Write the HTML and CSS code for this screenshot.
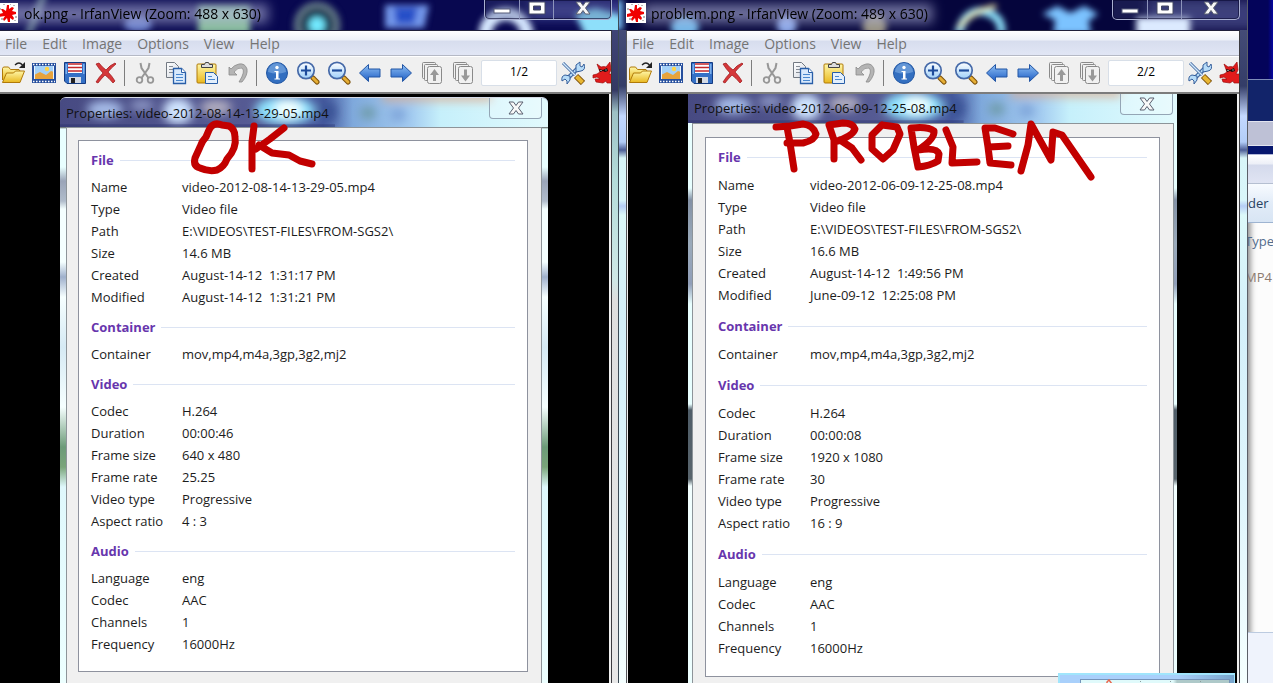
FILE: index.html
```html
<!DOCTYPE html>
<html lang="en">
<head>
<meta charset="utf-8">
<title>IrfanView</title>
<link rel="stylesheet" href="styles.css">
</head>
<body>
<svg class="defs" width="0" height="0" aria-hidden="true">
  <defs>
    <linearGradient id="gold" x1="0" y1="0" x2="0" y2="1"><stop offset="0" stop-color="#fff7a8"/><stop offset="1" stop-color="#e9b81f"/></linearGradient>
    <linearGradient id="blue" x1="0" y1="0" x2="0" y2="1"><stop offset="0" stop-color="#8fc0f4"/><stop offset="1" stop-color="#1c5cc4"/></linearGradient>
    <linearGradient id="paper" x1="0" y1="0" x2="1" y2="1"><stop offset="0" stop-color="#fff"/><stop offset="1" stop-color="#d5dae2"/></linearGradient>
    <linearGradient id="sky" x1="0" y1="0" x2="0" y2="1"><stop offset="0" stop-color="#fff"/><stop offset="1" stop-color="#9fd0fa"/></linearGradient>
    <linearGradient id="aero" x1="0" y1="0" x2="1" y2="0"><stop offset="0" stop-color="#474a82"/><stop offset=".4" stop-color="#565b94"/><stop offset=".54" stop-color="#46599e"/><stop offset=".6" stop-color="#7fa9dc"/><stop offset=".72" stop-color="#a3cbf0"/><stop offset=".78" stop-color="#c6f0fb"/><stop offset="1" stop-color="#e2fafd"/></linearGradient>
    <filter id="soft" x="-50%" y="-50%" width="200%" height="200%"><feGaussianBlur stdDeviation="3"/></filter>
    <filter id="cloud" x="-50%" y="-50%" width="200%" height="200%"><feGaussianBlur stdDeviation="5"/></filter>
    <filter id="haze" x="-50%" y="-80%" width="200%" height="260%"><feGaussianBlur stdDeviation="6"/></filter>
  </defs>
  <symbol id="dialog-glass" viewBox="0 0 488 31" preserveAspectRatio="none">
    <path fill="url(#aero)" d="M0 0h488v31H0z"/>
    <g filter="url(#cloud)"><ellipse cx="45" cy="12" rx="18" ry="9" fill="#a6bce8"/><ellipse cx="82" cy="8" rx="12" ry="6" fill="#8c96c4"/><ellipse cx="118" cy="14" rx="15" ry="14" fill="#cfe4ff"/><ellipse cx="156" cy="10" rx="16" ry="8" fill="#b1adc0"/><ellipse cx="225" cy="13" rx="30" ry="15" fill="#8fe4ff"/><ellipse cx="228" cy="12" rx="14" ry="10" fill="#f0ffff"/><ellipse cx="268" cy="15" rx="9" ry="12" fill="#3b5296"/><ellipse cx="308" cy="16" rx="8" ry="7" fill="#6f9cab"/><ellipse cx="338" cy="18" rx="8" ry="7" fill="#7fa5da"/><path fill="#dba98e" d="M322-8h110V4H322z" opacity=".7"/></g>
    <path fill="#232a66" d="M0 28h275v3H0z" opacity=".35"/>
  </symbol>
  <symbol id="i-logo" viewBox="0 0 20 20"><path fill="#fff" d="M0 0h20v20H0z"/><path fill="#b9b9b9" d="M1 5h2v2H1zM15 2h2v1h-2zM17 13h2v2h-2zM3 15h2v2H3zM5 1h2v1H5zM16 17h2v1h-2zM12 1h1v1h-1z"/><path fill="#f00000" d="M9 2h2v4l3-2 2 1-2 3 4 1v2l-4 1 2 3-1 2-3-2v4h-2l-1-4-3 3-1-2 2-3-6 1V11l4-1-2-4 2 0 3 2z"/></symbol>
  <symbol id="i-open" viewBox="0 0 24 24"><path fill="url(#gold)" stroke="#b07a08" d="M1.500 19V7.500l1-1.500h5l2 2.500h8.500l1 1.500v2"/><path fill="url(#gold)" stroke="#b07a08" stroke-linejoin="round" d="M1.500 21.500L5.500 12h7l2-2h9L19 21.500z"/><path fill="none" stroke="#222" stroke-width="1.300" d="M14 4q4-4 7.500 0"/><path d="M24 1v6h-6z" fill="#222"/></symbol>
  <symbol id="i-thumb" viewBox="0 0 24 24"><path fill="#264f9d" d="M0 2h24v20H0z"/><path fill="#a4d1f8" d="M2 5h20v13H2z"/><path fill="#e7a33c" d="M2 14l6-3 6 3 5-4 3 1v7H2z"/><circle cx="15" cy="8" r="2.200" fill="#ffd447"/><path stroke="#fff" stroke-width="1.300" stroke-dasharray="1.500 1.500" d="M1 3.500h22M1 20.500h22"/><path stroke="#e9f4ff" d="M2.500 5v13M21.500 5v13"/></symbol>
  <symbol id="i-save" viewBox="0 0 24 24"><path fill="#3470c6" stroke="#143b82" d="M1.500 1.500h21v21H4l-2.500-2.500z"/><path fill="#fff" d="M5 2h14v10H5z"/><path stroke="#c3272b" stroke-width="1.400" d="M5 3h14M5 6.500h14M5 10h14"/><path fill="#d4dbe6" d="M6 16h12v6H6z"/><path fill="#222" d="M8 17h4v5H8z"/><path fill="#7db0ec" d="M2.500 3H4v10H2.500zM20 3h1.500v10H20z"/></symbol>
  <symbol id="i-delete" viewBox="0 0 24 24"><path fill="#d5383a" stroke="#9c1013" stroke-width=".7" d="M2 3l3-1q3 4 7 7 4-5 9-7l1 1q-5 4-8 8 4 4 7 9l-2 2q-4-5-8-8-4 4-7 8l-2-1q3-5 7-9Q5 8 2 3z"/></symbol>
  <symbol id="i-cut" viewBox="0 0 24 24"><path fill="none" stroke="#979797" stroke-width="2" d="M7.500 2l1 5 7 10M16.500 2l-1 5-7 10"/><circle cx="6.500" cy="19" r="2.800" fill="none" stroke="#979797" stroke-width="1.800"/><circle cx="17.500" cy="19" r="2.800" fill="none" stroke="#979797" stroke-width="1.800"/></symbol>
  <symbol id="i-copy" viewBox="0 0 24 24"><path fill="url(#paper)" stroke="#727982" d="M2.500 1.500h8l4 4v11h-12z"/><path stroke="#858b94" d="M5 5.500h4M5 8.500h7M5 11.500h4"/><path fill="#d8e9fc" stroke="#285ea8" stroke-width="1.300" d="M9.500 7.500h8l4 4v11h-12z"/><path fill="#fff" stroke="#285ea8" d="M17.500 7.500v4h4"/><path stroke="#4a88cf" d="M12 13.500h7M12 16.500h7M12 19.500h7"/></symbol>
  <symbol id="i-paste" viewBox="0 0 24 24"><rect x="2" y="3" width="19" height="19" rx="1" fill="url(#gold)" stroke="#b07a08"/><path fill="#ddd" stroke="#444" d="M6.500 6.500v-3h3l1-2h3l1 2h3v3z"/><path fill="#e3effc" stroke="#285ea8" d="M10.500 11.500h8l4 4v7h-12z"/><path stroke="#4a88cf" d="M13 15.500h4M13 18.500h7"/></symbol>
  <symbol id="i-undo" viewBox="0 0 24 24"><path fill="#b4b4b4" stroke="#8b8b8b" stroke-width=".8" stroke-linejoin="round" d="M3 6v8h8l-3-3q4-5 8-4 4 3-3 14h3q6-7 5-13-2-6-8-5-5 1-8 5z"/></symbol>
  <symbol id="i-info" viewBox="0 0 24 24"><circle cx="12" cy="12" r="10.500" fill="#336fc0" stroke="#2257a4"/><path fill="#78a7df" opacity=".7" d="M3 11a9 9 0 0 1 18 0q-9 3-18 0z"/><circle cx="12" cy="6.500" r="1.700" fill="#fff"/><path fill="#fff" d="M9.500 10h4v7.500H15v1H9.500v-1H11V11H9.500z"/></symbol>
  <symbol id="i-zoomin" viewBox="0 0 24 24"><path stroke="#7b4f08" stroke-width="5" stroke-linecap="round" d="M17 17l4 4"/><path stroke="#e5ae35" stroke-width="3" stroke-linecap="round" d="M17 17l4 4"/><circle cx="10" cy="9.500" r="8.200" fill="url(#sky)" stroke="#4569a8" stroke-width="1.700"/><path stroke="#1d4b9b" stroke-width="2.200" d="M5 9.500h10M10 4.500v10"/></symbol>
  <symbol id="i-zoomout" viewBox="0 0 24 24"><path stroke="#7b4f08" stroke-width="5" stroke-linecap="round" d="M17 17l4 4"/><path stroke="#e5ae35" stroke-width="3" stroke-linecap="round" d="M17 17l4 4"/><circle cx="10" cy="9.500" r="8.200" fill="url(#sky)" stroke="#4569a8" stroke-width="1.700"/><path stroke="#1d4b9b" stroke-width="2.200" d="M5 9.500h10"/></symbol>
  <symbol id="i-prev" viewBox="0 0 24 24"><path fill="url(#blue)" stroke="#2356a5" stroke-linejoin="round" d="M1.500 12L10.500 3.500V8H22v8H10.500v4.500z"/></symbol>
  <symbol id="i-next" viewBox="0 0 24 24"><path fill="url(#blue)" stroke="#2356a5" stroke-linejoin="round" d="M22.500 12L13.500 3.500V8H2v8h11.500v4.500z"/></symbol>
  <symbol id="i-first" viewBox="0 0 24 24"><g fill="#f1f1f1" stroke="#8a8a8a"><rect x="2.500" y="1.500" width="13" height="16" rx="1"/><rect x="4.500" y="3.500" width="13" height="16" rx="1"/><rect x="7.500" y="5.500" width="14" height="17" rx="2"/></g><path fill="#999" d="M14.500 8l4.500 6h-3v6h-3v-6h-3z"/></symbol>
  <symbol id="i-last" viewBox="0 0 24 24"><g fill="#f1f1f1" stroke="#8a8a8a"><rect x="2.500" y="1.500" width="13" height="16" rx="1"/><rect x="4.500" y="3.500" width="13" height="16" rx="1"/><rect x="7.500" y="5.500" width="14" height="17" rx="2"/></g><path fill="#999" d="M14.500 20.500l4.500-6h-3v-6h-3v6h-3z"/></symbol>
  <symbol id="i-tools" viewBox="0 0 24 24"><path stroke="#365f9b" stroke-width="4" d="M6 18L17 7"/><path stroke="#b7dcf8" stroke-width="2.200" d="M6 18L17 7"/><path fill="#b7dcf8" stroke="#365f9b" d="M15 9V4l4-3v4l2 1 2-3q2 6-3 7l-5 1zM9 15v4l-3 4v-3l-2-2-3 2q-1-5 3-6z"/><path stroke="#365f9b" stroke-width="3" d="M2 2l12 12"/><path stroke="#d0e8fb" stroke-width="1.500" d="M2 2l12 12"/><path stroke="#7b4f08" stroke-width="6" d="M15 15l7 7"/><path stroke="#e8b632" stroke-width="4" d="M15.500 15.500l6 6"/></symbol>
  <symbol id="i-cat" viewBox="0 0 24 24"><path fill="#e01b1b" stroke="#9d0b0b" stroke-width=".7" d="M5 3l4 3q3-1 5 0l4-5 1 8-2 4 3 0 3-3 1 3-3 5v4h-6l-1-2-3 2-7-1-1-3 5 0-3-2-4 1 0-3 4-1 3-2z"/><path fill="#111" d="M7 8l4 1 4-2 1 3-3 1-2-1-3 1z"/><path stroke="#fff" d="M8.500 9.500h1M13.500 9h1"/></symbol>
  <symbol id="i-min" viewBox="0 0 18 16"><rect x="1" y="9" width="16" height="4" fill="#fff" stroke="#555b78"/></symbol>
  <symbol id="i-max" viewBox="0 0 18 16"><path fill="#fff" fill-rule="evenodd" stroke="#444963" d="M1 2h16v12H1zM5.500 6v4h7V6z"/></symbol>
  <symbol id="i-close" viewBox="0 0 18 16"><path fill="#f8f8f8" stroke="#5b6070" d="M2 2h4.500L9 5.500 11.500 2H16l-4.500 6L16 14h-4.500L9 10.500 6.500 14H2l4.500-6z"/></symbol>
</svg>

<main class="desktop">
  <section class="window window-left" aria-label="ok.png">
    <header class="titlebar">
      <svg class="glass" viewBox="0 0 618 30" preserveAspectRatio="none" aria-hidden="true">
        <g filter="url(#soft)"><path fill="#86bd9a" d="M198 6h52v28h-52z"/><ellipse cx="138" cy="24" rx="14" ry="8" fill="#7e9ae8" opacity=".8"/><path stroke="#a2c7bf" stroke-width="7" d="M44-5L28 35" opacity=".6"/><circle cx="317" cy="25" r="20" fill="#1b3d55" stroke="#5d7282" stroke-width="7"/><circle cx="317" cy="25" r="8" fill="#72e9ff"/><path fill="#7499ec" d="M385 5h44l-5 23h-39z"/><path fill="#2550c8" d="M394 7h24l-4 17h-18z"/><circle cx="506" cy="35" r="21" fill="none" stroke="#d7e8ff" stroke-width="13"/></g>
        <g filter="url(#haze)"><path fill="#b4b7dc" d="M-20 4h288v19H-20z" opacity=".6"/><path fill="#474b9a" d="M530 0h100v20H530z" opacity=".8"/></g>
        <g filter="url(#soft)"><path fill="#8edffa" d="M575 14l20-6 30 8v24h-38z"/></g>
      </svg>
      <svg class="logo"><use href="#i-logo"/></svg>
      <h1>ok.png - IrfanView (Zoom: 488 x 630)</h1>
      <div class="caption"><button aria-label="Minimize"><svg><use href="#i-min"/></svg></button><button aria-label="Maximize"><svg><use href="#i-max"/></svg></button><button aria-label="Close"><svg><use href="#i-close"/></svg></button></div>
    </header>
    <div class="client">
      <nav class="menu"><button>File</button><button>Edit</button><button>Image</button><button>Options</button><button>View</button><button>Help</button></nav>
      <div class="toolbar">
        <button aria-label="Open"><svg><use href="#i-open"/></svg></button><button aria-label="Thumbnails"><svg><use href="#i-thumb"/></svg></button><button aria-label="Save"><svg><use href="#i-save"/></svg></button><button aria-label="Delete"><svg><use href="#i-delete"/></svg></button><i class="sep"></i><button aria-label="Cut"><svg><use href="#i-cut"/></svg></button><button aria-label="Copy"><svg><use href="#i-copy"/></svg></button><button aria-label="Paste"><svg><use href="#i-paste"/></svg></button><button aria-label="Undo"><svg><use href="#i-undo"/></svg></button><i class="sep"></i><button aria-label="Information"><svg><use href="#i-info"/></svg></button><button aria-label="Zoom in"><svg><use href="#i-zoomin"/></svg></button><button aria-label="Zoom out"><svg><use href="#i-zoomout"/></svg></button><button aria-label="Previous"><svg><use href="#i-prev"/></svg></button><button aria-label="Next"><svg><use href="#i-next"/></svg></button><button aria-label="Previous page"><svg><use href="#i-first"/></svg></button><button aria-label="Next page"><svg><use href="#i-last"/></svg></button><input type="text" aria-label="File position" value="1/2"><button aria-label="Settings"><svg><use href="#i-tools"/></svg></button><button aria-label="About"><svg><use href="#i-cat"/></svg></button>
      </div>
      <div class="view">
        <article class="dialog">
          <header class="dialog-title"><svg class="glass" aria-hidden="true"><use href="#dialog-glass"/></svg><h2>Properties: video-2012-08-14-13-29-05.mp4</h2><button aria-label="Close properties"><svg><use href="#i-close"/></svg></button></header>
          <div class="dialog-body"><div class="page">
            <section class="group"><h3>File</h3><dl><dt>Name</dt><dd>video-2012-08-14-13-29-05.mp4</dd><dt>Type</dt><dd>Video file</dd><dt>Path</dt><dd>E:\VIDEOS\TEST-FILES\FROM-SGS2\</dd><dt>Size</dt><dd>14.6 MB</dd><dt>Created</dt><dd>August-14-12&nbsp; 1:31:17 PM</dd><dt>Modified</dt><dd>August-14-12&nbsp; 1:31:21 PM</dd></dl></section>
            <section class="group"><h3>Container</h3><dl><dt>Container</dt><dd>mov,mp4,m4a,3gp,3g2,mj2</dd></dl></section>
            <section class="group"><h3>Video</h3><dl><dt>Codec</dt><dd>H.264</dd><dt>Duration</dt><dd>00:00:46</dd><dt>Frame size</dt><dd>640 x 480</dd><dt>Frame rate</dt><dd>25.25</dd><dt>Video type</dt><dd>Progressive</dd><dt>Aspect ratio</dt><dd>4 : 3</dd></dl></section>
            <section class="group"><h3>Audio</h3><dl><dt>Language</dt><dd>eng</dd><dt>Codec</dt><dd>AAC</dd><dt>Channels</dt><dd>1</dd><dt>Frequency</dt><dd>16000Hz</dd></dl></section>
          </div></div>
          <svg class="scribble scribble-ok" viewBox="188 118 132 60" role="img" aria-label="OK">
            <path d="M222 125Q213 121 209 130L206 137Q202 141 200 147L195 158Q193 166 200 168Q209 172 217 170Q224 167 227 159Q237 148 235 137Q235 129 229 126L222 125"/><path d="M254 126L252 142V169"/><path d="M284 128L270 139L256 149"/><path d="M259 145L272 153L289 155L300 161L312 164"/>
          </svg>
        </article>
      </div>
    </div>
  </section>

  <section class="window window-right" aria-label="problem.png">
    <header class="titlebar">
      <svg class="glass" viewBox="0 0 629 30" preserveAspectRatio="none" aria-hidden="true">
        <g filter="url(#soft)"><path fill="#76baf0" d="M-8 0h12v30H-8z"/><ellipse cx="66" cy="27" rx="14" ry="11" fill="#71b5e7"/><ellipse cx="168" cy="25" rx="10" ry="10" fill="#8aa7e9"/><circle cx="256" cy="26" r="12" fill="#d4cc9d" opacity=".7"/><path fill="none" stroke="#8bdff8" stroke-width="8" d="M340 34q5-22 23-23 22 4 20 23"/><path fill="none" stroke="#f2e9a4" stroke-width="4" d="M340 28q14-18 38-22"/><path fill="#7bc3ff" d="M424 14l15-8 13 7 14-7 14 8-10 7 3 13h-38l2-14z"/></g>
        <g filter="url(#haze)"><path fill="#b4b7dc" d="M24 4h290v19H24z" opacity=".6"/><path fill="#474b8a" d="M530 0h110v30H530z" opacity=".8"/></g>
        <g filter="url(#soft)"><path fill="#dceaff" d="M518 17h54v20h-54z"/></g>
      </svg>
      <svg class="logo"><use href="#i-logo"/></svg>
      <h1>problem.png - IrfanView (Zoom: 489 x 630)</h1>
      <div class="caption"><button aria-label="Minimize"><svg><use href="#i-min"/></svg></button><button aria-label="Maximize"><svg><use href="#i-max"/></svg></button><button aria-label="Close"><svg><use href="#i-close"/></svg></button></div>
    </header>
    <div class="client">
      <nav class="menu"><button>File</button><button>Edit</button><button>Image</button><button>Options</button><button>View</button><button>Help</button></nav>
      <div class="toolbar">
        <button aria-label="Open"><svg><use href="#i-open"/></svg></button><button aria-label="Thumbnails"><svg><use href="#i-thumb"/></svg></button><button aria-label="Save"><svg><use href="#i-save"/></svg></button><button aria-label="Delete"><svg><use href="#i-delete"/></svg></button><i class="sep"></i><button aria-label="Cut"><svg><use href="#i-cut"/></svg></button><button aria-label="Copy"><svg><use href="#i-copy"/></svg></button><button aria-label="Paste"><svg><use href="#i-paste"/></svg></button><button aria-label="Undo"><svg><use href="#i-undo"/></svg></button><i class="sep"></i><button aria-label="Information"><svg><use href="#i-info"/></svg></button><button aria-label="Zoom in"><svg><use href="#i-zoomin"/></svg></button><button aria-label="Zoom out"><svg><use href="#i-zoomout"/></svg></button><button aria-label="Previous"><svg><use href="#i-prev"/></svg></button><button aria-label="Next"><svg><use href="#i-next"/></svg></button><button aria-label="Previous page"><svg><use href="#i-first"/></svg></button><button aria-label="Next page"><svg><use href="#i-last"/></svg></button><input type="text" aria-label="File position" value="2/2"><button aria-label="Settings"><svg><use href="#i-tools"/></svg></button><button aria-label="About"><svg><use href="#i-cat"/></svg></button>
      </div>
      <div class="view">
        <article class="dialog">
          <header class="dialog-title"><svg class="glass" aria-hidden="true"><use href="#dialog-glass"/></svg><h2>Properties: video-2012-06-09-12-25-08.mp4</h2><button aria-label="Close properties"><svg><use href="#i-close"/></svg></button></header>
          <div class="dialog-body"><div class="page">
            <section class="group"><h3>File</h3><dl><dt>Name</dt><dd>video-2012-06-09-12-25-08.mp4</dd><dt>Type</dt><dd>Video file</dd><dt>Path</dt><dd>E:\VIDEOS\TEST-FILES\FROM-SGS2\</dd><dt>Size</dt><dd>16.6 MB</dd><dt>Created</dt><dd>August-14-12&nbsp; 1:49:56 PM</dd><dt>Modified</dt><dd>June-09-12&nbsp; 12:25:08 PM</dd></dl></section>
            <section class="group"><h3>Container</h3><dl><dt>Container</dt><dd>mov,mp4,m4a,3gp,3g2,mj2</dd></dl></section>
            <section class="group"><h3>Video</h3><dl><dt>Codec</dt><dd>H.264</dd><dt>Duration</dt><dd>00:00:08</dd><dt>Frame size</dt><dd>1920 x 1080</dd><dt>Frame rate</dt><dd>30</dd><dt>Video type</dt><dd>Progressive</dd><dt>Aspect ratio</dt><dd>16 : 9</dd></dl></section>
            <section class="group"><h3>Audio</h3><dl><dt>Language</dt><dd>eng</dd><dt>Codec</dt><dd>AAC</dd><dt>Channels</dt><dd>1</dd><dt>Frequency</dt><dd>16000Hz</dd></dl></section>
          </div></div>
          <svg class="scribble scribble-problem" viewBox="768 114 332 70" role="img" aria-label="PROBLEM">
            <path d="M776 127L790 126L803 124Q813 125 816 134Q815 140 803 143L787 143M787 127L790 143L794 169"/>
            <path d="M829 125L834 140V159M829 125L843 123Q853 123 855 129Q853 136 835 142M840 140L852 148L861 160"/>
            <path d="M882 125L872 135V149L883 159L893 150L900 134L897 127L882 125"/>
            <path d="M911 128L914 147L918 167M911 128Q928 126 934 131Q935 139 918 150Q937 147 939 154L938 161Q930 166 918 167"/>
            <path d="M946 130L953 147L952 163L977 162"/><path d="M1013 134L995 128L985 128L988 147L990 163L1011 165M989 147L1008 146"/>
            <path d="M1021 171L1028 145L1031 124L1051 160L1053 132L1062 135L1091 177"/>
          </svg>
        </article>
      </div>
    </div>
    <div class="preview" aria-hidden="true"><div class="preview-inner"><svg viewBox="0 0 150 8"><path fill="none" stroke="#e9674e" stroke-width="1.500" d="M26 8V3l2-2 3 4v3"/><path fill="#8e9b9b" d="M59 2h1v1h-1zM89 2h1v1h-1zM119 2h1v1h-1z"/></svg></div></div>
  </section>

  <aside class="behind">
    <div class="behind-desk"></div><div class="behind-glass"></div><div class="behind-address"></div><div class="behind-gap"></div><div class="behind-menu"></div>
    <div class="behind-bar"><span>der</span></div>
    <div class="behind-list"><span class="head">Type</span><span>MP4</span></div>
    <div class="behind-foot"></div>
  </aside>
</main>
</body>
</html>
```

FILE: styles.css
```css
* { box-sizing: border-box; }
body { margin: 0; font-family: "Open Sans", "Noto Sans", sans-serif; font-size: 13px; color: #1c1c1c; background: #060640; }
h1, h2, h3, dl, dd { margin: 0; font-weight: 400; }
button { padding: 0; border: 0; background: none; font: inherit; color: inherit; }
svg { display: block; }
.defs { position: absolute; }

.desktop { display: grid; grid-template-columns: 619fr 629fr 25fr; min-height: 100vh; overflow: hidden; }
.window { position: relative; display: flex; flex-direction: column; min-width: 0; }
.window-left {
  padding-right: 6px;
  border-right: 1px solid #3c4a55;
  background: linear-gradient(#454a80 0, #343863 90px, #9dc0c4 112px, #b4dcda 180px, #cfe8e6 280px, #dedede 300px, #e8e8e8 100%);
}
.window-right {
  padding: 0 7px;
  border-right: 1px solid #5b5f68;
  background: linear-gradient(#4d537f 0, #343d68 86px, #c4d9ff 116px, #b2cdf8 142px, #4c5d96 150px, #d8f5f8 158px, #d9f6fa 200px, #b6cdf5 206px, #dcf9fa 215px, #d4f0fa 320px, #dff5fc 500px, #f5ffff 100%);
}

.titlebar { position: relative; display: flex; align-items: flex-start; height: 30px; margin-right: -6px; background: #080850; overflow: hidden; }
.window-right .titlebar { margin: 0 -7px; padding-left: 7px; background: #05053c; }
.glass { position: absolute; inset: 0; width: 100%; height: 100%; }
.logo { position: relative; flex: none; width: 20px; height: 20px; margin-top: 3px; }
.window-left .logo { margin-left: -2px; }
.titlebar h1 { position: relative; margin-left: 6px; font-size: 14px; line-height: 28px; color: #000; white-space: nowrap; }
.window-right .titlebar h1 { margin-left: 5px; }
.caption { position: relative; display: flex; height: 20px; margin: 0 6px 0 auto; border: 1px solid #a9b0d1; border-top: 0; border-radius: 0 0 5px 5px; background: rgba(70, 75, 130, .3); box-shadow: inset 0 0 0 1px rgba(10, 10, 50, .6); }
.window-right .caption { margin-right: 7px; }
.caption button { display: flex; justify-content: center; width: 34px; }
.caption button + button { border-left: 1px solid #8d94bb; }
.caption button:last-child { width: 58px; }
.caption svg { width: 18px; height: 16px; }

.client { display: flex; flex-direction: column; flex: 1; border-right: 1px solid #3b3b40; border-top: 1px solid #20203a; box-shadow: 0 -1px #b8bfdc; background: #f0f0f0; }
.window-right .client { border-left: 1px solid #55555a; }
.menu { display: flex; gap: 15px; height: 25px; padding-left: 5px; background: linear-gradient(#fff 0, #eef1f8 9px, #d7ddee 10px, #e1e6f5 100%); border-bottom: 1px solid #b5b9c5; color: #747474; font-size: 14px; line-height: 26px; }
.menu button { height: 26px; }
.window-right .menu { padding-left: 5px; }
.toolbar { display: flex; align-items: center; height: 38px; padding-bottom: 3px; overflow: hidden; border-top: 1px solid #fff; border-bottom: 2px solid #7c7c7c; background: #f0f0f0; }
.toolbar button { display: flex; flex: none; justify-content: center; width: 31px; }
.toolbar button:first-child { margin-left: -3px; }
.toolbar svg { width: 24px; height: 24px; }
.sep { flex: none; width: 1px; height: 26px; margin: 0 4px 0 3px; background: #7d7d7d; }
.toolbar input { width: 76px; height: 26px; margin: 0 0 0 3px; padding: 0 0 3px; border: 1px solid #d8dfe8; border-radius: 2px; background: #fff; text-align: center; font: 12px "Open Sans", sans-serif; color: #000; }

.view { display: flex; flex: 1; background: #000; border-right: 2px solid #f0f0f0; padding: 0 61px 0 60px; }
.window-left .view { padding-top: 3px; }
.window-right .view { padding-right: 60px; margin-left: 1px; }
.dialog {
  position: relative; display: flex; flex-direction: column; flex: 1; min-width: 0; padding: 0 6px;
  border-radius: 6px 6px 0 0;
  background: linear-gradient(transparent 0 29px, #e8ffff 32px, #e8ffff 70px, #9aa4b8 84px, #b0bccb 104px, #f4ffff 112px, #f4ffff 165px, #9fb0cc 180px, #f6ffff 200px, #d6eaf4 250px, #f6ffff 310px, #6c9b78 350px, #7aa57a 370px, #dff8fc 390px, #edffff 100%);
}
.window-right .dialog { padding: 0 3px 0 4px; border-radius: 0; background: linear-gradient(#e8ffff 0 94px, #8391a5 106px, #9aaaba 150px, #909eb8 190px, #e8ffff 210px, #e8ffff 310px, #4f5d68 316px, #58646c 385px, #f2ffff 392px, #edffff 100%); }
.dialog-title { position: relative; display: flex; align-items: flex-start; justify-content: space-between; height: 30px; margin: 0 -6px; padding: 0 6px; overflow: hidden; border-top: 1px solid #d6dbe7; border-radius: 6px 6px 0 0; background: #565b94; }
.window-right .dialog-title { height: 29px; margin: 0 -3px 0 -4px; padding: 0 4px 0 6px; border-top: 0; border-radius: 0; }
.dialog-title h2 { position: relative; font-size: 13px; line-height: 30px; color: #111; white-space: nowrap; }
.window-right .dialog-title h2 { line-height: 29px; }
.dialog-title button { position: relative; display: flex; align-items: center; justify-content: center; width: 53px; height: 21px; border: 1px solid #94a5b5; border-top: 0; border-radius: 0 0 4px 4px; background: rgba(255, 255, 255, .25); }
.dialog-title button svg { width: 18px; height: 16px; }
.dialog-body { flex: 1; padding: 12px 13px 10px 11px; border: 1px solid #8d9499; border-bottom: 0; background: #f0f0f0; }
.window-right .dialog-body { padding: 13px 13px 7px 12px; }
.page { padding: 8px 12px 8px; border: 1px solid #8e929e; background: #fff; }
.group { padding-bottom: 8px; }
.window-right .group { padding-bottom: 9px; }
.group h3 { display: flex; align-items: center; gap: 6px; margin-bottom: 5px; font-size: 13px; font-weight: 700; line-height: 22px; color: #6736ad; }
.window-right .group h3 { margin-bottom: 6px; }
.group h3::after { content: ""; flex: 1; height: 1px; background: #dce4f3; }
.group dl { display: grid; grid-template-columns: 91px 1fr; line-height: 22px; white-space: nowrap; }
.window-right .group dl { grid-template-columns: 92px 1fr; }

.scribble { position: absolute; fill: none; stroke: #c20000; stroke-width: 7; stroke-linecap: round; stroke-linejoin: round; }
.scribble-ok { left: 128px; top: 21px; width: 132px; height: 60px; }
.scribble-problem { left: 80px; top: 20px; width: 332px; height: 70px; }

.preview { position: absolute; right: 12px; bottom: 0; width: 177px; height: 11px; padding: 4px 4px 0 20px; border: solid #a0e5fc; border-width: 2px 1px 0 2px; background: linear-gradient(90deg, #a9d0fb 118px, #78a5cc); }
.preview-inner { height: 6px; border: 1px solid #7594ba; border-bottom: 0; background: linear-gradient(90deg, #e0fafb 92px, #aec9c9 96px); }
.preview-inner svg { width: 150px; height: 8px; margin-top: -1px; }

.behind { display: flex; flex-direction: column; overflow: hidden; background: #fcfcfc; box-shadow: inset 7px 0 6px -5px rgba(0, 0, 0, .5); }
.behind-desk { height: 79px; background: linear-gradient(90deg, #04045a 80%, #0606a0); }
.behind-glass { height: 42px; border-top: 1px solid #7e8cb8; background: #12246a; }
.behind-address { height: 25px; border: solid #e2e4ef; border-width: 1px 0; background: #bec1d6; }
.behind-gap { height: 9px; border-bottom: 1px solid #b2b8d8; background: #06166e; }
.behind-menu { height: 29px; background: linear-gradient(#fff, #eceff7 9px, #d4daec 10px, #e0e4f3); border-bottom: 1px solid #b5bfd1; }
.behind-bar { height: 39px; border-bottom: 1px solid #9eb4d1; background: linear-gradient(#f8fbff, #e2ecf8 50%, #d8e5f4); font-size: 13px; line-height: 38px; color: #28415f; }
.behind-list { display: flex; flex: 1; flex-direction: column; align-items: flex-start; line-height: 36px; font-size: 13px; color: #8c7b70; }
.behind-list span { margin-left: -3px; }
.behind-list .head { color: #526c8c; }
.behind-foot { height: 52px; border-top: 1px solid #bccbe0; background: #eff3fc; }
```
